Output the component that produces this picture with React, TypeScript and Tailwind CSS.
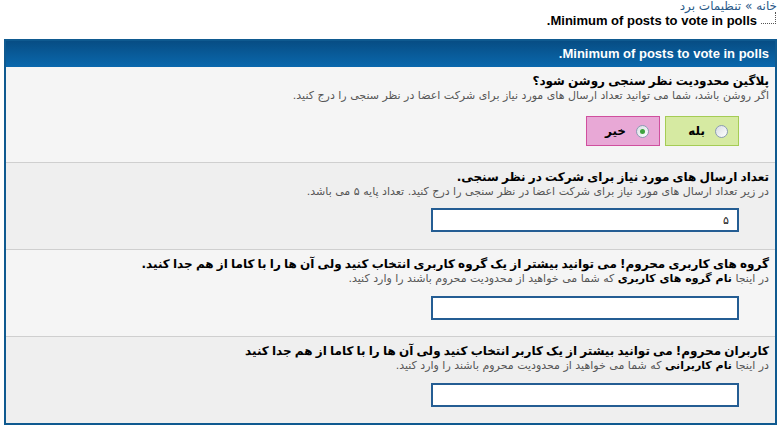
import React from "react";

const fa = "font-['DejaVu_Sans',sans-serif]";

function Radio({ checked }: { checked?: boolean }) {
  return (
    <span className="relative inline-flex h-[13px] w-[13px] items-center justify-center rounded-full border border-[#8b9cb4] bg-[linear-gradient(135deg,#d9dde3,#ffffff)]">
      {checked ? <span className="h-[5px] w-[5px] rounded-full bg-[#3fa33f]" /> : null}
    </span>
  );
}

function Row({
  title,
  desc,
  alt,
  last,
  children,
  className,
}: {
  title: string;
  desc: React.ReactNode;
  alt?: boolean;
  last?: boolean;
  children: React.ReactNode;
  className?: string;
}) {
  return (
    <div
      className={`px-[6px] pt-[7px] ${alt ? "bg-[#efefef]" : "bg-[#f5f5f5]"} ${
        last ? "" : "border-b border-[#cfcfcf]"
      } ${className ?? ""}`}
    >
      <div className={`${fa} text-[12px] font-bold leading-[15px] text-black [word-spacing:-1px]`}>{title}</div>
      <div className={`${fa} text-[11px] leading-[14px] text-[#555]`}>{desc}</div>
      {children}
    </div>
  );
}

function TextBox({ value }: { value?: string }) {
  return (
    <div className="pr-[30px]">
      <input
        dir="rtl"
        defaultValue={value}
        className={`${fa} block h-[24px] w-[308px] border-2 border-[#245d93] bg-white px-[8px] text-[11px] text-[#222] outline-none`}
      />
    </div>
  );
}

export default function App() {
  return (
    <div dir="rtl" className="min-h-[429px] w-full bg-white">
      <div className={`${fa} pr-[5px] text-[12px] leading-[12px] text-[#2b5a88]`}>
        خانه » تنظیمات برد
      </div>
      <div className="flex items-start pr-[6px]">
        <span className="h-[12px] w-[15px] border-b border-r border-dotted border-[#555]" />
        <h1 className="mr-[4px] mt-[1px] font-['Liberation_Sans',Arial,sans-serif] text-[13px] font-bold leading-[15px] text-black">
          Minimum of posts to vote in polls.
        </h1>
      </div>
      <div className="ml-[4px] mr-[5px] mt-[11px] border-2 border-[#0f5a90]">
        <div className="flex h-[26px] items-center bg-[linear-gradient(#074d84,#0a68ad)] px-[6px]">
          <span className="font-['Liberation_Sans',Arial,sans-serif] text-[13px] font-bold text-white">
            Minimum of posts to vote in polls.
          </span>
        </div>
        <Row
          title="پلاگین محدودیت نظر سنجی روشن شود؟"
          desc="اگر روشن باشد، شما می توانید تعداد ارسال های مورد نیاز برای شرکت اعضا در نظر سنجی را درج کنید."
          className="pb-[16px]"
        >
          <div className="mt-[13px] flex gap-[5px] pr-[30px]">
            <label className="flex h-[30px] w-[74px] items-center gap-[10px] border border-[#a5cc55] bg-[#d6eaa2] pr-[10px]">
              <Radio />
              <span className={`${fa} text-[12px] font-bold text-black`}>بله</span>
            </label>
            <label className="flex h-[30px] w-[74px] items-center gap-[10px] border border-[#d04f9e] bg-[#e8a8d6] pr-[10px]">
              <Radio checked />
              <span className={`${fa} text-[12px] font-bold text-black`}>خیر</span>
            </label>
          </div>
        </Row>
        <Row
          alt
          title="تعداد ارسال های مورد نیاز برای شرکت در نظر سنجی."
          desc="در زیر تعداد ارسال های مورد نیاز برای شرکت اعضا در نظر سنجی را درج کنید. تعداد پایه ۵ می باشد."
          className="pb-[17px]"
        >
          <div className="mt-[9px]">
            <TextBox value="۵" />
          </div>
        </Row>
        <Row
          title="گروه های کاربری محروم! می توانید بیشتر از یک گروه کاربری انتخاب کنید ولی آن ها را با کاما از هم جدا کنید."
          desc={
            <>
              در اینجا <b className="text-black">نام گروه های کاربری</b> که شما می خواهید از محدودیت محروم باشند را وارد کنید.
            </>
          }
          className="pb-[16px]"
        >
          <div className="mt-[10px]">
            <TextBox />
          </div>
        </Row>
        <Row
          alt
          last
          title="کاربران محروم! می توانید بیشتر از یک کاربر انتخاب کنید ولی آن ها را با کاما از هم جدا کنید"
          desc={
            <>
              در اینجا <b className="text-black">نام کاربرانی</b> که شما می خواهید از محدودیت محروم باشند را وارد کنید.
            </>
          }
          className="pb-[16px]"
        >
          <div className="mt-[10px]">
            <TextBox />
          </div>
        </Row>
      </div>
    </div>
  );
}
